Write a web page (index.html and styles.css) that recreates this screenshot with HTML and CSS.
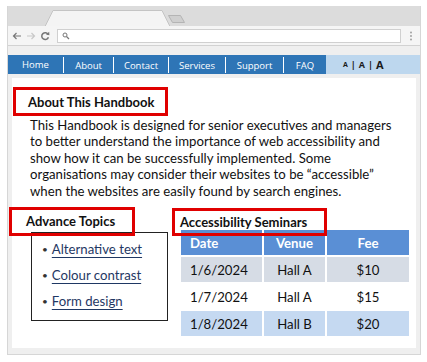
FILE: index.html
```html
<!DOCTYPE html>
<html lang="en">

<head>
    <meta charset="UTF-8">
    <meta name="viewport" content="width=device-width, initial-scale=1.0">
    <title>Accessibility Handbook</title>
    <link rel="stylesheet" href="styles.css">
</head>

<body>
    <div class="window">
        <div class="tabbar">
            <svg width="412" height="20" viewBox="0 0 412 20">
                <polygon points="37,20.5 45,4.5 154,4.5 162,20.5" fill="#f4f4f4" stroke="#c4c4c4" stroke-width="1"/>
                <polygon points="160.5,9.5 172.5,9.5 176.5,16.5 164.5,16.5" fill="#cfcfcf" stroke="#b4b4b4" stroke-width="1"/>
            </svg>
        </div>
        <div class="toolbar">
            <svg class="nav-icon" width="10" height="10" viewBox="0 0 10 10">
                <path d="M9 5H1.5M4.5 2L1.5 5L4.5 8" fill="none" stroke="#777" stroke-width="1.2"/>
            </svg>
            <svg class="nav-icon" width="10" height="10" viewBox="0 0 10 10">
                <path d="M1 5H8.5M5.5 2L8.5 5L5.5 8" fill="none" stroke="#c8c8c8" stroke-width="1.2"/>
            </svg>
            <svg class="nav-icon" width="10" height="10" viewBox="0 0 10 10">
                <path d="M8.2 3.6A3.4 3.4 0 1 0 8.4 6.2" fill="none" stroke="#777" stroke-width="1.5"/>
                <polygon points="6,3.6 9.2,0.8 9.4,4.2" fill="#777"/>
            </svg>
            <div class="address">
                <svg width="8" height="8" viewBox="0 0 8 8">
                    <circle cx="3" cy="3" r="2" fill="none" stroke="#777" stroke-width="1"/>
                    <path d="M4.5 4.5L7 7" stroke="#777" stroke-width="1.2"/>
                </svg>
            </div>
            <svg class="dots" width="4" height="10" viewBox="0 0 4 10">
                <circle cx="2" cy="1.5" r="0.9" fill="#999"/>
                <circle cx="2" cy="5" r="0.9" fill="#999"/>
                <circle cx="2" cy="8.5" r="0.9" fill="#999"/>
            </svg>
        </div>

        <div class="viewport">
            <div class="menu">
                <ul class="menu-links">
                    <li><a href="#">Home</a></li>
                    <li><a href="#">About</a></li>
                    <li><a href="#">Contact</a></li>
                    <li><a href="#">Services</a></li>
                    <li><a href="#">Support</a></li>
                    <li><a href="#">FAQ</a></li>
                </ul>
                <div class="sizes">
                    <a href="#" class="size-s">A</a> | <a href="#" class="size-m">A</a> | <a href="#" class="size-l">A</a>
                </div>
            </div>

            <div class="page">
                <h2 class="mark about-title">About This Handbook</h2>
                <p class="intro">This Handbook is designed for senior executives and managers to better understand the importance of web accessibility and show how it can be successfully implemented. Some organisations may consider their websites to be “accessible” when the websites are easily found by search engines.</p>

                <div class="cols">
                    <div class="topics">
                        <h2 class="mark topics-title">Advance Topics</h2>
                        <ul class="topic-list">
                            <li><a href="#">Alternative text</a></li>
                            <li><a href="#">Colour contrast</a></li>
                            <li><a href="#">Form design</a></li>
                        </ul>
                    </div>
                    <div class="seminars">
                        <h2 class="mark seminars-title">Accessibility Seminars</h2>
                        <table class="seminar-table">
                            <tr>
                                <th>Date</th>
                                <th>Venue</th>
                                <th>Fee</th>
                            </tr>
                            <tr class="row-grey">
                                <td>1/6/2024</td>
                                <td>Hall A</td>
                                <td>$10</td>
                            </tr>
                            <tr>
                                <td>1/7/2024</td>
                                <td>Hall A</td>
                                <td>$15</td>
                            </tr>
                            <tr class="row-blue">
                                <td>1/8/2024</td>
                                <td>Hall B</td>
                                <td>$20</td>
                            </tr>
                        </table>
                    </div>
                </div>
            </div>
        </div>
    </div>
</body>

</html>
```

FILE: styles.css
```css
body {
    margin: 0;
    background: #fff;
    font-family: Lato, "Liberation Sans", sans-serif;
    color: #111;
}

.window {
    width: 414px;
    height: 349px;
    margin: 6px 0 0 7px;
    box-sizing: border-box;
    border: 1px solid #d6d6d6;
    border-top: none;
    background: #efefef;
    display: flex;
    flex-direction: column;
}

.tabbar {
    height: 20px;
    background: #dcdcdc;
}

.tabbar svg {
    display: block;
}

.toolbar {
    height: 19px;
    background: #f5f5f5;
    border-bottom: 1px solid #d2d2d2;
    display: flex;
    align-items: center;
    padding-left: 4px;
}

.nav-icon {
    margin-right: 4px;
}

.address {
    width: 344px;
    height: 14px;
    margin-left: 3px;
    background: #fff;
    border: 1px solid #d0d0d0;
    display: flex;
    align-items: center;
    padding-left: 4px;
    box-sizing: border-box;
}

.dots {
    margin-left: 8px;
}

.viewport {
    flex: 1;
    padding-top: 9px;
    display: flex;
    flex-direction: column;
}

.menu {
    display: flex;
    height: 19px;
    font-family: "Open Sans", sans-serif;
    font-size: 9.5px;
}

.menu-links {
    display: grid;
    grid-template-columns: 55px 50px 55px 57px 58px 43px;
    margin: 0;
    padding: 0;
    list-style: none;
    background: #2e75b6;
}

.menu-links li {
    display: flex;
    align-items: center;
    justify-content: center;
}

.menu-links li + li {
    border-left: 1px solid #fff;
    margin: 2px 0 1px;
}

.menu-links a {
    color: #fff;
    text-decoration: none;
}

.sizes {
    flex: 1;
    background: #bdd7ee;
    display: flex;
    align-items: center;
    padding-left: 17px;
    font-weight: bold;
    color: #1a1a1a;
    gap: 3px;
    font-size: 9px;
}

.sizes a {
    color: #1a1a1a;
    text-decoration: none;
}

.size-s {
    font-size: 7px;
}

.size-m {
    font-size: 9px;
}

.size-l {
    font-size: 11px;
}

.page {
    flex: 1;
    margin: 4px 4px 6px;
    background: #fff;
    padding-top: 9px;
}

.mark {
    position: relative;
    z-index: 1;
    display: block;
    box-sizing: border-box;
    margin: 0;
    border: 3px solid #e00000;
    font-size: 13px;
    font-weight: bold;
    line-height: 17px;
}

.about-title {
    width: 155px;
    height: 29px;
    margin-left: 1px;
    padding: 4px 0 0 12px;
}

.intro {
    margin: 1px 0 0 18px;
    width: 372px;
    font-size: 13.2px;
    line-height: 16.4px;
}

.cols {
    display: flex;
    margin-top: 8px;
}

.topics {
    width: 163px;
    margin-left: -3px;
}

.topics-title {
    width: 126px;
    height: 29px;
    padding: 3px 0 0 14px;
}

.topic-list {
    list-style: none;
    margin: -4px 0 0 22px;
    width: 137px;
    height: 89px;
    box-sizing: border-box;
    border: 1px solid #222;
    padding: 3px 0 0 10px;
}

.topic-list li {
    height: 26px;
    display: flex;
    align-items: center;
    font-size: 13.2px;
}

.topic-list li::before {
    content: "•";
    margin-right: 4px;
    font-size: 10px;
    color: #333;
}

.topic-list a {
    color: #1f3864;
    text-decoration: underline;
    text-underline-offset: 3px;
}

.seminars {
    flex: 1;
    margin-top: 1px;
}

.seminars-title {
    width: 155px;
    height: 28px;
    padding: 3px 0 0 5px;
}

.seminar-table {
    margin: -8px 0 0 7px;
    border-spacing: 2px;
    font-size: 13.2px;
}

.seminar-table th,
.seminar-table td {
    height: 25px;
    padding: 0;
    text-align: center;
}

.seminar-table th:first-child,
.seminar-table td:first-child {
    width: 72px;
    padding-left: 9px;
    text-align: left;
}

.seminar-table th:nth-child(2),
.seminar-table td:nth-child(2) {
    width: 61px;
}

.seminar-table th:nth-child(3),
.seminar-table td:nth-child(3) {
    width: 82px;
}

.seminar-table th {
    background: #5a8fd5;
    color: #fff;
    font-weight: bold;
}

.row-grey td {
    background: #d6dce5;
}

.row-blue td {
    background: #c5d9f1;
}
```
